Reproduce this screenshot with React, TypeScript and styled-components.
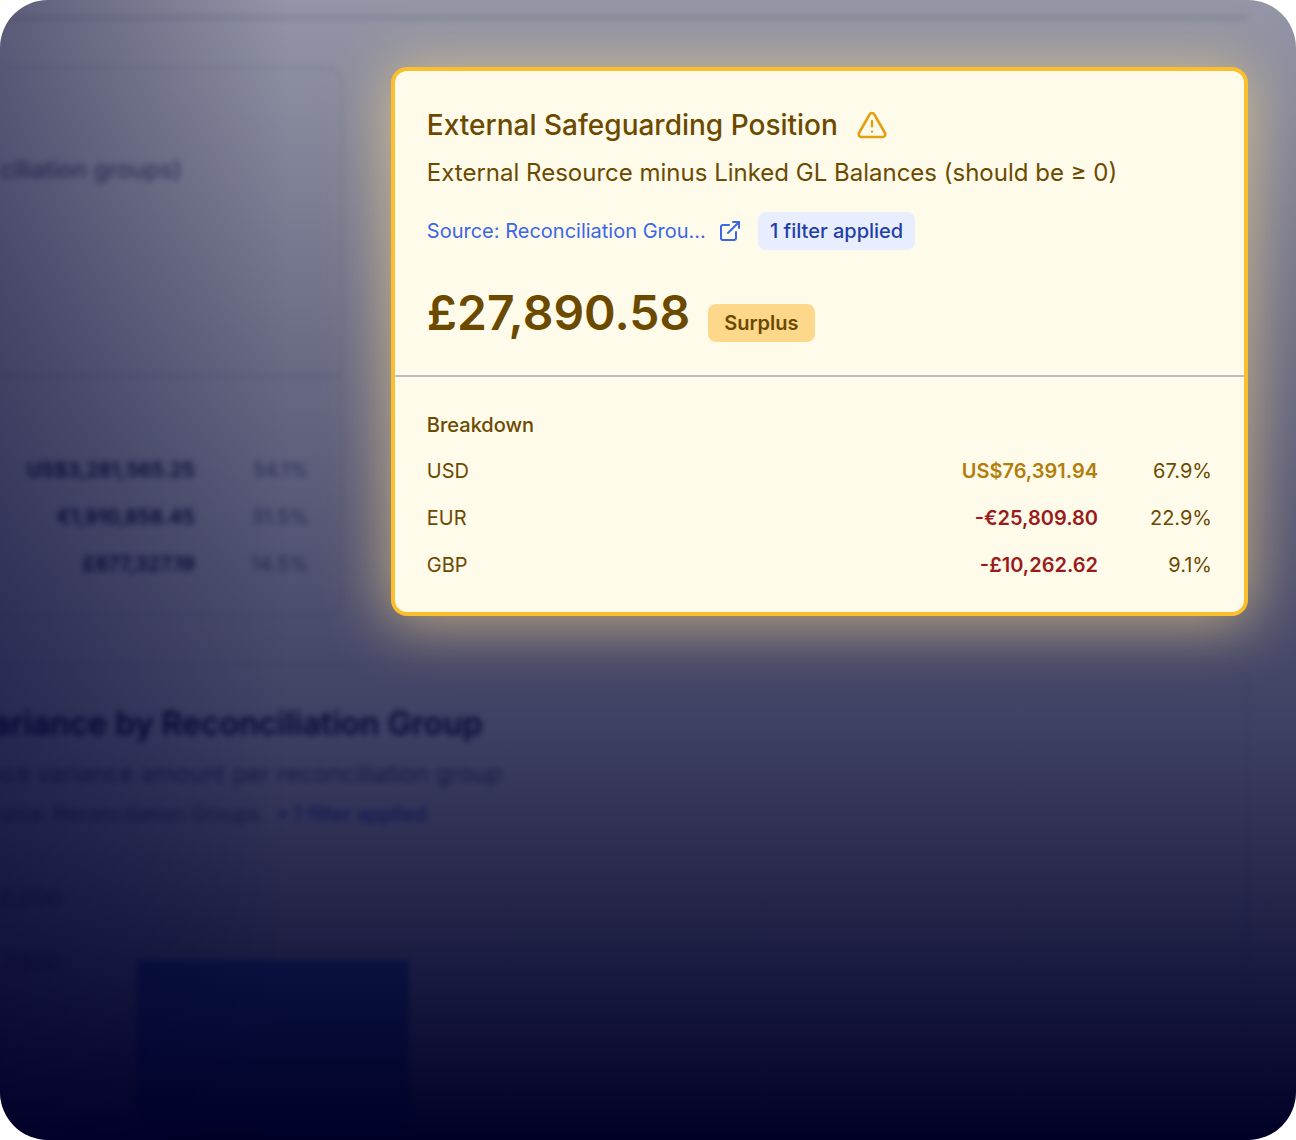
import React from "react";
import styled, { createGlobalStyle, css } from "styled-components";
import { ExternalLink } from "lucide-react";

const GlobalStyle = createGlobalStyle`
  *, *::before, *::after { box-sizing: border-box; }
  body {
    margin: 0;
    background: #ffffff;
    font-family: Inter, "Liberation Sans", sans-serif;
  }
  h2, p { margin: 0; }
`;

const Frame = styled.main`
  position: relative;
  display: flex;
  flex-direction: column;
  gap: 48px;
  min-height: 100vh;
  padding-right: 48px;
  overflow: hidden;
  border-radius: 48px;
  background: #ffffff;
`;

const Scrim = styled.div`
  position: absolute;
  inset: 0;
  z-index: 1;
  pointer-events: none;
  background:
    linear-gradient(to right, rgba(0, 0, 48, 0.38), rgba(0, 0, 48, 0) 290px),
    linear-gradient(to bottom, rgba(0, 4, 44, 0.42), rgba(4, 6, 52, 0.77) 64%, rgba(0, 0, 38, 1));
`;

const softFocus = css`
  filter: blur(3px);
`;

const TopBar = styled.header`
  ${softFocus}
  height: 19px;
  border-bottom: 3px solid #d5d6de;
`;

const CardGrid = styled.section`
  display: grid;
  grid-template-columns: minmax(0, 2fr) minmax(0, 5fr);
  gap: 48px;
`;

const MutedCard = styled.article`
  ${softFocus}
  display: flex;
  flex-direction: column;
  border: 2px solid #e4e5ec;
  border-left: 0;
  border-radius: 0 16px 16px 0;
  white-space: nowrap;
  color: #6c6e88;
`;

const MutedHead = styled.div`
  height: 308px;
  padding-top: 84px;
  border-bottom: 2px solid #cfd0da;
  font-size: 24px;
  line-height: 34px;
  color: #5c5e7a;
`;

const MutedBody = styled.div`
  padding: 69px 32px 0 0;
`;

const Table = styled.table`
  width: 100%;
  border-collapse: collapse;
  font-size: 20px;
  line-height: 24px;
`;

const HeadLabel = styled.caption`
  padding: 0 0 10px;
  font-weight: 500;
  text-align: left;
`;

const Currency = styled.th`
  height: 47px;
  padding: 0;
  font-weight: 400;
  text-align: left;
`;

const toneColors = { positive: "#b37d0b", negative: "#991b1b", muted: "#16183c" };

const Amount = styled.td<{ $tone: keyof typeof toneColors }>`
  height: 47px;
  padding: 0;
  color: ${(p) => toneColors[p.$tone]};
  font-weight: 600;
  text-align: right;
`;

const Share = styled.td`
  width: 114px;
  height: 47px;
  padding: 0;
  text-align: right;
`;

const HighlightCard = styled.article`
  position: relative;
  z-index: 2;
  border: 4px solid #fbbf2d;
  border-radius: 16px;
  background: #fffbea;
  color: #6b4a00;
  box-shadow: 0 4px 60px 6px rgba(250, 218, 140, 0.62);
`;

const CardHead = styled.div`
  padding: 32px 32px 33px;
  border-bottom: 2px solid #bdbcc0;
`;

const TitleRow = styled.div`
  display: flex;
  align-items: center;
  gap: 18px;
  height: 44px;
`;

const Title = styled.h2`
  font-size: 28px;
  line-height: 36px;
  font-weight: 500;
`;

const Subtitle = styled.p`
  padding-top: 8px;
  font-size: 24px;
  line-height: 36px;
`;

const SourceRow = styled.div`
  display: flex;
  align-items: center;
  gap: 16px;
  padding-top: 21px;
`;

const SourceLink = styled.a`
  display: flex;
  align-items: center;
  gap: 12px;
  color: #3b66e8;
  font-size: 20px;
  line-height: 24px;
  text-decoration: none;
`;

const Pill = styled.span<{ $kind: "filter" | "status" }>`
  padding: 7px ${(p) => (p.$kind === "filter" ? 12 : 16)}px;
  border-radius: 8px;
  background: ${(p) => (p.$kind === "filter" ? "#e9eeff" : "#fed88a")};
  color: ${(p) => (p.$kind === "filter" ? "#1f3fa8" : "#6b4a00")};
  font-size: 20px;
  line-height: 24px;
  font-weight: ${(p) => (p.$kind === "filter" ? 500 : 600)};
`;

const TotalRow = styled.div`
  display: flex;
  align-items: flex-end;
  gap: 18px;
  padding-top: 34px;
`;

const Total = styled.p`
  font-size: 48px;
  line-height: 58px;
  font-weight: 600;
`;

const CardBody = styled.div`
  padding: 36px 32px 24px;
`;

const ChartCard = styled.section`
  ${softFocus}
  display: flex;
  flex: 1;
  flex-direction: column;
  border: 2px solid #e4e5ec;
  border-width: 2px 2px 0 0;
  border-radius: 0 16px 0 0;
  padding-top: 38px;
  color: #6c6e88;
  font-size: 20px;
  line-height: 40px;
  white-space: nowrap;
`;

const ChartTitle = styled.h2`
  color: #0c0e38;
  font-size: 32px;
  line-height: 40px;
  font-weight: 600;
  text-indent: -8px;
`;

const ChartSubtitle = styled.p`
  padding-top: 10px;
  font-size: 24px;
  text-indent: -12px;
`;

const ChartMeta = styled.p`
  display: flex;
  gap: 18px;
`;

const FilterNote = styled.span`
  color: #3b6ee0;
  font-weight: 500;
`;

const Chart = styled.div`
  display: flex;
  flex: 1;
  gap: 76px;
  padding-top: 44px;
`;

const Axis = styled.div`
  display: flex;
  flex-direction: column;
  gap: 24px;
  width: 61px;
  font-size: 22px;
  text-align: right;
`;

const Bar = styled.div`
  width: 272px;
  margin-top: 82px;
  background: #4f98f4;
`;

const WarningIcon = () => (
  <svg width="32" height="32" viewBox="0 0 24 24" fill="none" stroke="#e0a010" strokeLinecap="round" strokeLinejoin="round" role="img" aria-label="Warning">
    <path strokeWidth="2" d="m21.73 18-8-14a2 2 0 0 0-3.48 0l-8 14A2 2 0 0 0 4 21h16a2 2 0 0 0 1.73-3" />
    <path strokeWidth="1.8" d="M12 9v4M12 17h.01" />
  </svg>
);

const breakdown = [
  { code: "USD", amount: "US$76,391.94", share: "67.9%", tone: "positive" },
  { code: "EUR", amount: "-€25,809.80", share: "22.9%", tone: "negative" },
  { code: "GBP", amount: "-£10,262.62", share: "9.1%", tone: "negative" },
] as const;

const resources = [
  { amount: "US$3,281,565.25", share: "54.1%" },
  { amount: "€1,910,858.45", share: "31.5%" },
  { amount: "£877,327.19", share: "14.5%" },
];

export default function App() {
  return (
    <>
      <GlobalStyle />
      <Frame>
        <TopBar />
        <CardGrid>
          <MutedCard>
            <MutedHead>ciliation groups)</MutedHead>
            <MutedBody>
              <Table>
                <tbody>
                  {resources.map((row) => (
                    <tr key={row.amount}>
                      <Amount $tone="muted">{row.amount}</Amount>
                      <Share>{row.share}</Share>
                    </tr>
                  ))}
                </tbody>
              </Table>
            </MutedBody>
          </MutedCard>
          <HighlightCard>
            <CardHead>
              <TitleRow>
                <Title>External Safeguarding Position</Title>
                <WarningIcon />
              </TitleRow>
              <Subtitle>External Resource minus Linked GL Balances (should be ≥ 0)</Subtitle>
              <SourceRow>
                <SourceLink href="#source">
                  Source: Reconciliation Grou...
                  <ExternalLink size={24} aria-hidden="true" />
                </SourceLink>
                <Pill $kind="filter">1 filter applied</Pill>
              </SourceRow>
              <TotalRow>
                <Total>£27,890.58</Total>
                <Pill $kind="status">Surplus</Pill>
              </TotalRow>
            </CardHead>
            <CardBody>
              <Table>
                <HeadLabel>Breakdown</HeadLabel>
                <tbody>
                  {breakdown.map((row) => (
                    <tr key={row.code}>
                      <Currency scope="row">{row.code}</Currency>
                      <Amount $tone={row.tone}>{row.amount}</Amount>
                      <Share>{row.share}</Share>
                    </tr>
                  ))}
                </tbody>
              </Table>
            </CardBody>
          </HighlightCard>
        </CardGrid>
        <ChartCard>
          <ChartTitle>ariance by Reconciliation Group</ChartTitle>
          <ChartSubtitle>nce variance amount per reconciliation group</ChartSubtitle>
          <ChartMeta>
            <span>urce: Reconciliation Groups</span>
            <FilterNote>• 1 filter applied</FilterNote>
          </ChartMeta>
          <Chart>
            <Axis>
              <span>0,000</span>
              <span>7,500</span>
            </Axis>
            <Bar />
          </Chart>
        </ChartCard>
        <Scrim />
      </Frame>
    </>
  );
}
